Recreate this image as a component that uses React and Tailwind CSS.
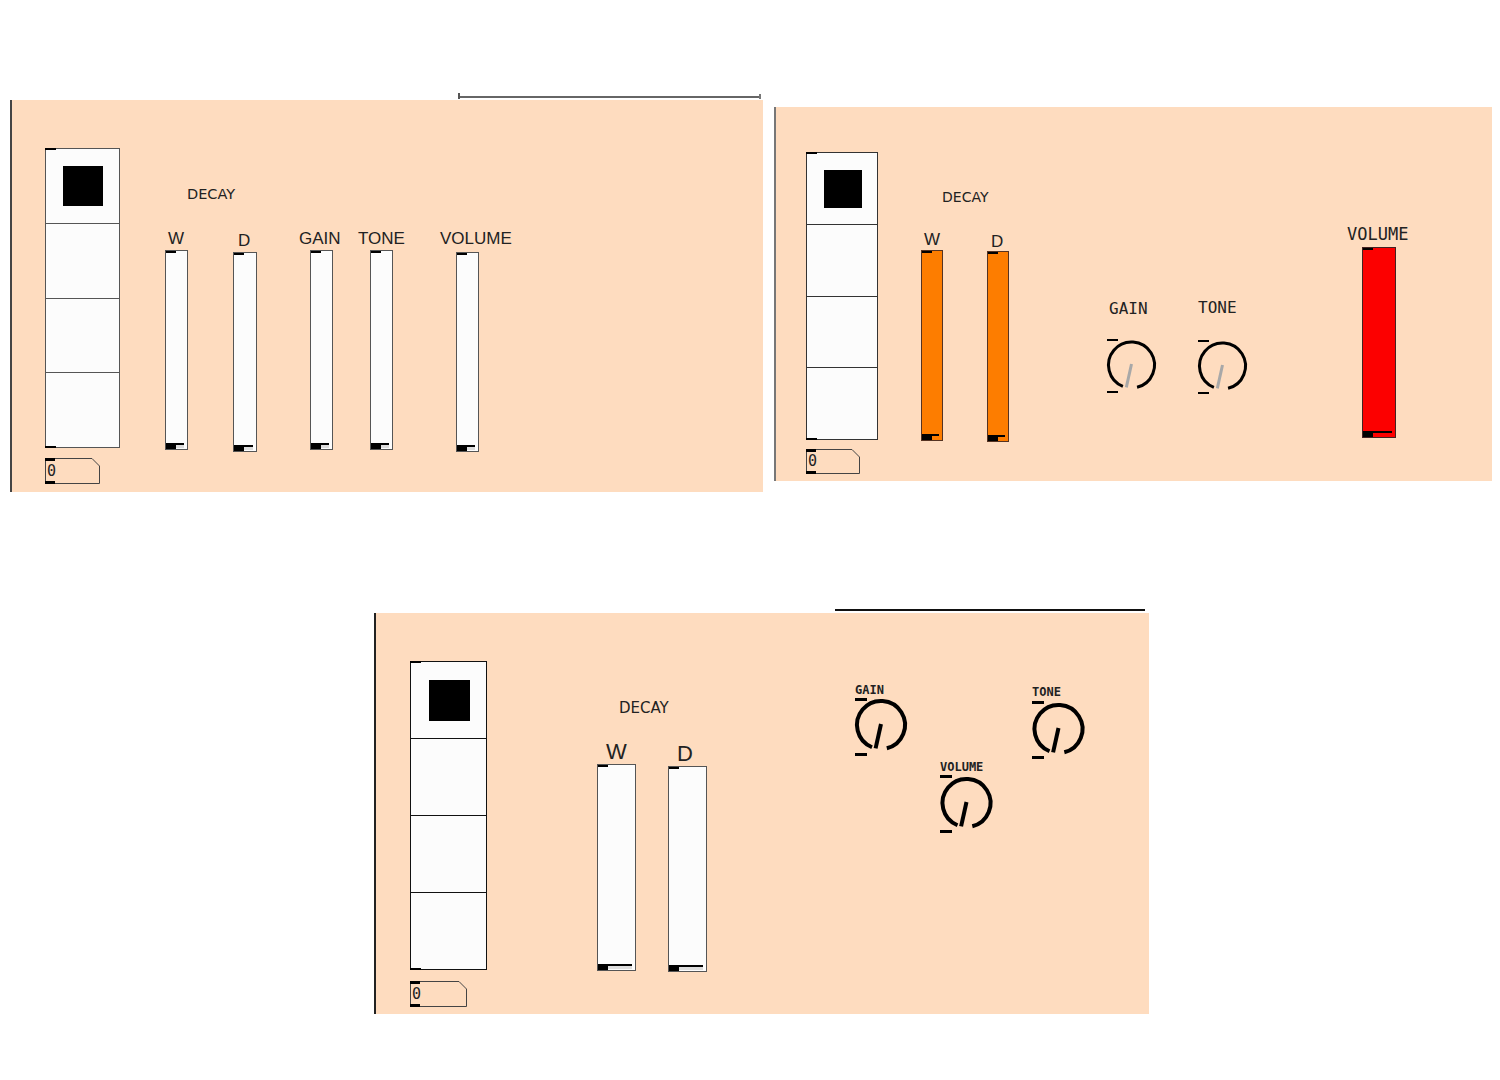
const peach = "bg-[#fedcbf]";
const arial = "font-['Liberation_Sans',Arial,sans-serif]";
const dejavu = "font-['DejaVu_Sans',sans-serif]";
const mono = "font-['DejaVu_Sans_Mono',monospace]";

const Label = ({ className, children }) => (
  <div className={`absolute whitespace-nowrap leading-none text-[#222] ${className}`}>
    {children}
  </div>
);

// vertical slider, value at the bottom
const VSlider = ({ className, fill = "bg-[#fcfcfc]", strip = "bg-[#ddd]" }) => (
  <div className={`absolute border border-[#555] ${fill} ${className}`}>
    <div className="absolute left-0 top-0 h-[2px] w-[10px] bg-black" />
    <div className="absolute bottom-[4px] left-0 right-[3px] h-[2px] bg-black" />
    <div className={`absolute bottom-[1px] left-[9px] right-[3px] h-[3px] ${strip}`} />
    <div className="absolute bottom-0 left-0 h-[5px] w-[10px] bg-black" />
  </div>
);

const Radio = ({ className, sqClass, line = "border-[#555]" }) => (
  <div className={`absolute flex flex-col border bg-[#fcfcfc] ${line} ${className}`}>
    <div className="relative flex-1">
      <div className={`absolute bg-black ${sqClass}`} />
    </div>
    <div className={`flex-1 border-t ${line}`} />
    <div className={`flex-1 border-t ${line}`} />
    <div className={`flex-1 border-t ${line}`} />
    <div className="absolute -left-px -top-px h-[2px] w-[11px] bg-black" />
    <div className="absolute -bottom-px -left-px h-[2px] w-[11px] bg-black" />
  </div>
);

const NumBox = ({ className, w, h }) => (
  <div className={`absolute ${className}`}>
    <svg className="absolute inset-0" width={w} height={h}>
      <polygon
        points={`0.5,0.5 ${w - 8},0.5 ${w - 0.5},8 ${w - 0.5},${h - 0.5} 0.5,${h - 0.5}`}
        fill="none"
        stroke="#444"
        strokeWidth="1"
      />
    </svg>
    <div className="absolute left-0 top-0 h-[3px] w-[10px] bg-black" />
    <div className="absolute bottom-0 left-0 h-[3px] w-[10px] bg-black" />
    <div className={`absolute left-[2px] top-0 flex h-full items-center text-[15px] leading-none text-[#222] ${mono}`}>
      0
    </div>
  </div>
);

const Knob = ({ className, w, h, cx, cy, r, sw, needle, tick }) => {
  const rad = (d) => (d * Math.PI) / 180;
  const pt = (a) => [cx + r * Math.sin(rad(a)), cy + r * Math.cos(rad(a))];
  const [x1, y1] = pt(-22);
  const [x2, y2] = pt(14);
  const [nx, ny] = pt(-13);
  return (
    <div className={`absolute ${className}`}>
      <svg className="absolute inset-0 overflow-visible" width={w} height={h}>
        <path
          d={`M${x1} ${y1} A${r} ${r} 0 1 1 ${x2} ${y2}`}
          fill="none"
          stroke="#000"
          strokeWidth={sw}
        />
        <line x1={cx} y1={cy - 1} x2={nx} y2={ny} stroke={needle} strokeWidth={sw} />
      </svg>
      <div className={`absolute left-0 top-0 bg-black ${tick}`} />
      <div className={`absolute bottom-0 left-0 bg-black ${tick}`} />
    </div>
  );
};

const PanelOne = () => (
  <div className={`relative ml-[10px] mt-[100px] h-[392px] w-[753px] shrink-0 ${peach}`}>
    <div className="absolute bottom-0 left-0 top-0 w-[2px] bg-[#444]" />
    {/* bracket above */}
    <div className="absolute left-[448px] top-[-7px] h-[7px] w-[303px]">
      <div className="absolute bottom-[2px] left-0 right-0 h-[2px] bg-[#666]" />
      <div className="absolute left-0 top-0 h-[6px] w-[2px] bg-[#555]" />
      <div className="absolute right-0 top-[1px] h-[5px] w-[2px] bg-[#777]" />
    </div>

    <Radio className="left-[35px] top-[48px] h-[300px] w-[75px]" sqClass="left-[17px] top-[17px] h-[40px] w-[40px]" />
    <NumBox className="left-[35px] top-[358px] h-[26px] w-[55px]" w={55} h={26} />

    <Label className={`left-[177px] top-[87px] text-[14.5px] ${dejavu}`}>DECAY</Label>
    <Label className={`left-[158px] top-[130px] text-[17px] ${arial}`}>W</Label>
    <Label className={`left-[228px] top-[132px] text-[17px] ${arial}`}>D</Label>
    <Label className={`left-[289px] top-[130px] text-[17px] ${arial}`}>GAIN</Label>
    <Label className={`left-[348px] top-[130px] text-[17px] ${arial}`}>TONE</Label>
    <Label className={`left-[430px] top-[130px] text-[17px] ${arial}`}>VOLUME</Label>

    <VSlider className="left-[155px] top-[150px] h-[200px] w-[23px]" />
    <VSlider className="left-[223px] top-[152px] h-[200px] w-[24px]" />
    <VSlider className="left-[300px] top-[150px] h-[200px] w-[23px]" />
    <VSlider className="left-[360px] top-[150px] h-[200px] w-[23px]" />
    <VSlider className="left-[446px] top-[152px] h-[200px] w-[23px]" />
  </div>
);

const PanelTwo = () => (
  <div className={`relative ml-[11px] mt-[107px] h-[374px] w-[718px] shrink-0 ${peach}`}>
    <div className="absolute bottom-0 left-0 top-0 w-[2px] bg-[#777]" />

    <Radio className="left-[32px] top-[45px] h-[288px] w-[72px]" sqClass="left-[17px] top-[17px] h-[38px] w-[38px]" line="border-[#333]" />
    <NumBox className="left-[32px] top-[342px] h-[25px] w-[54px]" w={54} h={25} />

    <Label className={`left-[168px] top-[83px] text-[14px] ${dejavu}`}>DECAY</Label>
    <Label className={`left-[150px] top-[124px] text-[17px] ${arial}`}>W</Label>
    <Label className={`left-[217px] top-[126px] text-[17px] ${arial}`}>D</Label>

    <VSlider className="left-[147px] top-[143px] h-[191px] w-[22px] border-[#553322]" fill="bg-[#fd7d00]" strip="bg-transparent" />
    <VSlider className="left-[213px] top-[144px] h-[191px] w-[22px] border-[#553322]" fill="bg-[#fd7d00]" strip="bg-transparent" />

    <Label className={`left-[335px] top-[194px] text-[16px] ${mono}`}>GAIN</Label>
    <Label className={`left-[424px] top-[193px] text-[16px] ${mono}`}>TONE</Label>
    <Knob className="left-[333px] top-[232px] h-[54px] w-[50px]" w={50} h={54} cx={24.5} cy={26} r={23} sw={3} needle="#a8a8a8" tick="h-[2px] w-[11px]" />
    <Knob className="left-[424px] top-[233px] h-[54px] w-[50px]" w={50} h={54} cx={24.5} cy={26} r={23} sw={3} needle="#a8a8a8" tick="h-[2px] w-[11px]" />

    <Label className={`left-[573px] top-[119px] text-[17px] ${mono}`}>VOLUME</Label>
    <VSlider className="left-[588px] top-[140px] h-[191px] w-[34px] border-[#442222]" fill="bg-[#fc0000]" strip="bg-transparent" />
  </div>
);

const PanelThree = () => (
  <div className={`relative ml-[374px] mt-[121px] h-[401px] w-[775px] ${peach}`}>
    <div className="absolute bottom-0 left-0 top-0 w-[2px] bg-[#222]" />
    <div className="absolute left-[461px] top-[-4px] h-[2px] w-[310px] bg-[#111]" />

    <Radio className="left-[36px] top-[48px] h-[309px] w-[77px]" sqClass="left-[18px] top-[18px] h-[41px] w-[41px]" line="border-[#111]" />
    <NumBox className="left-[36px] top-[368px] h-[26px] w-[57px]" w={57} h={26} />

    <Label className={`left-[245px] top-[88px] text-[15px] ${dejavu}`}>DECAY</Label>
    <Label className={`left-[232px] top-[128px] text-[22px] ${arial}`}>W</Label>
    <Label className={`left-[303px] top-[130px] text-[22px] ${arial}`}>D</Label>

    <VSlider className="left-[223px] top-[151px] h-[207px] w-[39px] border-[#333]" />
    <VSlider className="left-[294px] top-[153px] h-[206px] w-[39px] border-[#333]" />

    <Label className={`left-[481px] top-[71px] text-[12px] font-bold ${mono}`}>GAIN</Label>
    <Label className={`left-[658px] top-[73px] text-[12px] font-bold ${mono}`}>TONE</Label>
    <Label className={`left-[566px] top-[148px] text-[12px] font-bold ${mono}`}>VOLUME</Label>

    <Knob className="left-[481px] top-[85px] h-[58px] w-[54px]" w={54} h={58} cx={26} cy={27} r={24} sw={4} needle="#000" tick="h-[3px] w-[12px]" />
    <Knob className="left-[658px] top-[88px] h-[58px] w-[54px]" w={54} h={58} cx={26.5} cy={28} r={24} sw={4} needle="#000" tick="h-[3px] w-[12px]" />
    <Knob className="left-[566px] top-[162px] h-[58px] w-[54px]" w={54} h={58} cx={26.5} cy={28} r={24} sw={4} needle="#000" tick="h-[3px] w-[12px]" />
  </div>
);

export default function App() {
  return (
    <div className="min-h-screen w-[1500px] bg-white">
      <div className="flex items-start">
        <PanelOne />
        <PanelTwo />
      </div>
      <PanelThree />
    </div>
  );
}
